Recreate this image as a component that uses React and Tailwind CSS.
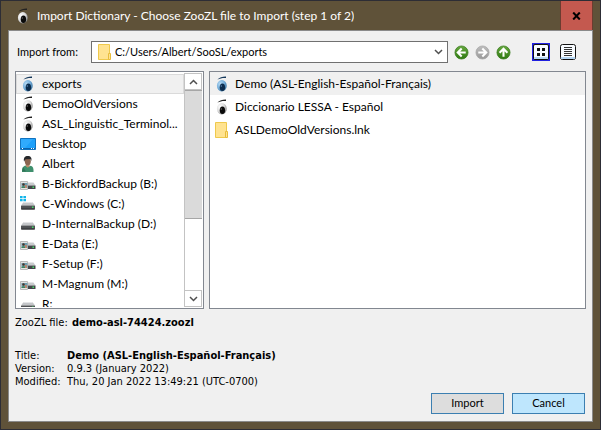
import React from 'react';

function Eye({ blue = false, className = 'h-4 w-4' }) {
  const id = blue ? 'eye-blue' : 'eye-white';
  return (
    <svg viewBox="0 0 16 16" className={className + ' shrink-0'} aria-hidden="true">
      <defs>
        <radialGradient id={id} cx=".35" cy=".35" r=".7">
          <stop offset="0" stopColor={blue ? '#b9dcf5' : '#ffffff'} />
          <stop offset="0.6" stopColor={blue ? '#74aedb' : '#dcdcdc'} />
          <stop offset="1" stopColor={blue ? '#3b739f' : '#858585'} />
        </radialGradient>
      </defs>
      <ellipse cx="7.800" cy="9.700" rx="4.900" ry="5.700" fill={'url(#' + id + ')'} />
      <ellipse cx="8.400" cy="11.300" rx="2.700" ry="3.800" fill={blue ? '#0c2c4d' : '#0a0a0a'} />
      <circle cx="7.300" cy="10" r=".7" fill={blue ? '#5f93bd' : '#6c6c6c'} />
      <path d="M3.400 3.600C5.400 1.400 8.800.5 12 .6v1.500C9 1.800 6 2.500 3.400 3.600z" fill={blue ? '#16395c' : '#222222'} />
    </svg>
  );
}

function Folder() {
  return (
    <svg viewBox="0 0 16 18" className="h-[18px] w-4 shrink-0" aria-hidden="true">
      <path d="M1.500 1.500h11v15h-11z" fill="#ffe391" stroke="#efc94c" />
      <path d="M11.500 10.500h2v6h-2z" fill="#ffe391" stroke="#e8bd3c" />
    </svg>
  );
}

function Desktop() {
  return (
    <svg viewBox="0 0 16 16" className="h-4 w-4 shrink-0" aria-hidden="true">
      <path d="M.5 2.500h15v11H.5z" fill="#1da0fa" stroke="#1173c0" />
      <path d="M1 3h12L5 12H1z" fill="#3db0ff" opacity=".6" />
      <path d="M1 12h14v1H1z" fill="#0b63ad" />
      <path d="M2 12h1v1H2zM11 12h1v1h-1zM13 12h1v1h-1z" fill="#fff" />
    </svg>
  );
}

function Person() {
  return (
    <svg viewBox="0 0 16 16" className="h-4 w-4 shrink-0" aria-hidden="true">
      <path d="M2 16c-.3-3.500.8-5.600 3.200-6.500l3 1.200 2.600-1c2.200.7 3 2.800 2.700 6.300z" fill="#3f8f6d" />
      <path d="M5.800 8h3.800v2.200l-1.800 1.600-2-1.600z" fill="#b98a68" />
      <ellipse cx="7.800" cy="5.200" rx="3" ry="4" fill="#8a6450" />
      <path d="M4 5.500C3.200 1.800 5 0 7.800 0c3 0 4.300 2 3.400 5l-.8-2-4.800.3z" fill="#26282b" />
      <path d="M3 11l3 4.500H2z" fill="#2f7557" />
    </svg>
  );
}

function Drive({ kind = 'plain' }) {
  if (kind === 'network') {
    return (
      <svg viewBox="0 0 16 16" className="h-4 w-4 shrink-0" aria-hidden="true">
        <path d="M7 6.500h6.500l2 3H7z" fill="#c9cbce" />
        <path d="M7 9.500h8.500V13H7z" fill="#44474a" />
        <path d="M12.500 10.500h1.500V12h-1.500z" fill="#43d564" />
        <path d="M.5 5.500h7v8h-7z" fill="#e4e4e4" stroke="#b9b9b9" />
        <path d="M1.500 7h6v5h-6z" fill="#6f9dad" />
        <circle cx="3.500" cy="8.500" r="1.200" fill="#4b3329" />
        <path d="M1.500 12c0-2.500 3.500-2.500 4 0z" fill="#41845e" />
        <path d="M5 9h2v3H5z" fill="#b98a70" />
      </svg>
    );
  }
  return (
    <svg viewBox="0 0 16 16" className="h-4 w-4 shrink-0" aria-hidden="true">
      <path d="M3.500 6h9l2.500 3.500H1z" fill="#c4c6c9" />
      <path d="M3.500 6h9l.7 1H2.800z" fill="#e4e5e7" />
      <rect x="1" y="9.500" width="14" height="4" rx=".6" fill="#505255" />
      <path d="M1.500 12.500h13v1h-13z" fill="#2c2e31" />
      <path d="M12 10.500h1.500V12H12z" fill="#43d564" />
      {kind === 'windows' && (
        <g>
          <path d="M0 0h7v6H0z" fill="#fff" />
          <path d="M0 0h2.600v2.200H0zM3.400 0H6v2.200H3.400zM0 3h2.600v2.200H0zM3.400 3H6v2.200H3.400z" fill="#10b5ea" />
        </g>
      )}
    </svg>
  );
}

function RoundArrow({ label, direction, disabled = false }) {
  const id = 'arrow-' + direction;
  const turn = { left: 0, up: 90, right: 180 }[direction];
  return (
    <button type="button" aria-label={label} disabled={disabled} className="h-[15px] w-[15px] shrink-0">
      <svg viewBox="0 0 16 16" className="block h-[15px] w-[15px]" aria-hidden="true">
        <defs>
          <linearGradient id={id} x1="0" y1="0" x2="0" y2="1">
            <stop offset="0" stopColor={disabled ? '#bdbdbd' : '#67a83f'} />
            <stop offset="1" stopColor={disabled ? '#9a9a9a' : '#2f7a12'} />
          </linearGradient>
        </defs>
        <circle cx="8" cy="8" r="7" fill={'url(#' + id + ')'} stroke={disabled ? '#a8a8a8' : '#3c7d22'} strokeWidth=".8" />
        <g transform={'rotate(' + turn + ' 8 8)'}>
          <path d="M8.200 3.800L4 8l4.200 4.200M4.500 8H12.500" fill="none" stroke="#fff" strokeWidth="2.200" />
        </g>
      </svg>
    </button>
  );
}

const places = [
  { name: 'exports', icon: <Eye blue />, selected: true },
  { name: 'DemoOldVersions', icon: <Eye /> },
  { name: 'ASL_Linguistic_Terminol...', icon: <Eye /> },
  { name: 'Desktop', icon: <Desktop /> },
  { name: 'Albert', icon: <Person /> },
  { name: 'B-BickfordBackup (B:)', icon: <Drive kind="network" /> },
  { name: 'C-Windows (C:)', icon: <Drive kind="windows" /> },
  { name: 'D-InternalBackup (D:)', icon: <Drive /> },
  { name: 'E-Data (E:)', icon: <Drive kind="network" /> },
  { name: 'F-Setup (F:)', icon: <Drive kind="network" /> },
  { name: 'M-Magnum (M:)', icon: <Drive kind="network" /> },
  { name: 'R:', icon: <Drive /> },
];

const files = [
  { name: 'Demo (ASL-English-Español-Français)', icon: <Eye blue />, selected: true },
  { name: 'Diccionario LESSA - Español', icon: <Eye /> },
  { name: 'ASLDemoOldVersions.lnk', icon: <Folder /> },
];

function Chevron({ up = false }) {
  return (
    <svg viewBox="0 0 9 6" className="h-[6px] w-[9px]" aria-hidden="true">
      <path d={up ? 'M1 5l3.500-3.500L8 5' : 'M1 1l3.500 3.500L8 1'} fill="none" stroke="#505050" strokeWidth="1.500" />
    </svg>
  );
}

function ScrollBar() {
  return (
    <div className="flex w-[18px] shrink-0 flex-col border-l border-[#c3c3c3] bg-white">
      <button type="button" aria-label="Scroll up" className="flex h-[17px] items-center justify-center border border-l-0 border-[#c3c3c3]">
        <Chevron up />
      </button>
      <div className="h-[129px] border-y border-[#a6a6a6] bg-[#dadada]" />
      <div className="flex-1" />
      <button type="button" aria-label="Scroll down" className="flex h-[17px] items-center justify-center border border-l-0 border-[#c3c3c3]">
        <Chevron />
      </button>
    </div>
  );
}

export default function App() {
  return (
    <div className="flex min-h-screen flex-col border border-[#2d2d35] bg-[#5f5239] px-[7px] pb-[7px] font-['Lato','Open_Sans',sans-serif] text-xs text-black">
      <header className="flex h-[29px] shrink-0 items-center text-white">
        <div className="flex min-w-0 flex-1 items-center gap-[6px] pl-[7px]">
          <Eye />
          <h1 className="truncate">Import Dictionary - Choose ZooZL file to Import (step 1 of 2)</h1>
        </div>
        <button type="button" aria-label="Close" className="flex h-full w-[33px] items-center justify-center border-x border-[#6b3c30] bg-[#c4594f]">
          <svg viewBox="0 0 9 8" className="h-2 w-[9px]" aria-hidden="true">
            <path d="M1.200.5l6.600 7M7.800.5l-6.600 7" stroke="#000" strokeWidth="2" />
          </svg>
        </button>
      </header>

      <main className="flex flex-1 flex-col border border-[#8a8a8a] bg-[#f0f0f0] px-[6px] pt-[10px] pb-[7px]">
        <div className="flex h-[22px] items-center pl-[2px]">
          <label htmlFor="location" className="w-[74px] shrink-0 text-[11px]">Import from:</label>
          <div className="relative flex h-[22px] min-w-0 flex-1 items-center border border-[#707070] bg-white">
            <span className="pointer-events-none absolute left-[5px]"><Folder /></span>
            <select id="location" className="h-full w-full appearance-none bg-transparent pl-[23px] text-[11px]">
              <option>C:/Users/Albert/SooSL/exports</option>
            </select>
            <span className="pointer-events-none absolute right-1 flex"><Chevron /></span>
          </div>
          <div className="flex items-center gap-[6px] pl-[6px]">
            <RoundArrow label="Back" direction="left" />
            <RoundArrow label="Forward" direction="right" disabled />
            <RoundArrow label="Up" direction="up" />
          </div>
          <div className="flex items-center gap-[9px] pr-[9px] pl-[21px]">
            <button type="button" aria-label="Icon view" className="h-[18px] w-[18px] bg-[#2020e0]">
              <svg viewBox="0 0 18 18" className="block h-[18px] w-[18px]" aria-hidden="true">
                <rect x="1.500" y="1.500" width="15" height="15" rx="1.500" fill="#f7fbff" stroke="#111" />
                <path d="M2 14h14v2H2z" fill="#b5d7f5" />
                <path d="M5 5h3v3H5zM10 5h3v3h-3zM5 10h3v3H5zM10 10h3v3h-3z" fill="#111" />
              </svg>
            </button>
            <button type="button" aria-label="List view" className="h-[18px] w-[18px]">
              <svg viewBox="0 0 18 18" className="block h-[18px] w-[18px]" aria-hidden="true">
                <rect x="1.500" y="1.500" width="15" height="15" rx="2" fill="#f7fbff" stroke="#111" />
                <path d="M2 14h14v2H2z" fill="#b5d7f5" />
                <path d="M5 4.500h8M5 6.500h8M5 8.500h8M5 10.500h8M5 12.500h8" stroke="#333" />
              </svg>
            </button>
          </div>
        </div>

        <div className="mt-2 flex gap-[5px]">
          <section aria-label="Places" className="flex h-[238px] w-[189px] shrink-0 border border-[#828790] bg-white p-px pl-0">
            <ul className="min-w-0 flex-1 overflow-hidden pt-px">
              {places.map((place) => (
                <li key={place.name}>
                  <button
                    type="button"
                    className={
                      place.selected
                        ? 'flex h-5 w-full items-center gap-[6px] border border-[#dadada] bg-[#f0f0f0] pl-[3px] whitespace-nowrap'
                        : 'flex h-5 w-full items-center gap-[6px] pl-1 whitespace-nowrap'
                    }
                  >
                    {place.icon}
                    {place.name}
                  </button>
                </li>
              ))}
            </ul>
            <ScrollBar />
          </section>
          <section aria-label="Files" className="h-[238px] min-w-0 flex-1 border border-[#828790] bg-white">
            <ul>
              {files.map((file) => (
                <li key={file.name}>
                  <button
                    type="button"
                    className={
                      file.selected
                        ? 'flex h-[23px] w-full items-center gap-[5px] bg-[#f0f0f0] pl-1 whitespace-nowrap'
                        : 'flex h-[23px] w-full items-center gap-[5px] pl-1 whitespace-nowrap'
                    }
                  >
                    {file.icon}
                    {file.name}
                  </button>
                </li>
              ))}
            </ul>
          </section>
        </div>

        <div className="mt-[6px] flex h-4 items-center font-['DejaVu_Sans_Condensed','Open_Sans',sans-serif] text-[11px]">
          <span className="w-[57px] whitespace-nowrap">ZooZL file:</span>
          <strong>demo-asl-74424.zoozl</strong>
        </div>

        <dl className="mt-[18px] grid grid-cols-[52px_1fr] font-['DejaVu_Sans_Condensed','Open_Sans',sans-serif] text-[11px] leading-[13px]">
          <dt>Title:</dt>
          <dd className="font-bold">Demo (ASL-English-Español-Français)</dd>
          <dt>Version:</dt>
          <dd>0.9.3 (January 2022)</dd>
          <dt>Modified:</dt>
          <dd>Thu, 20 Jan 2022 13:49:21 (UTC-0700)</dd>
        </dl>

        <div className="mt-auto flex justify-end gap-2 pr-px text-[11px]">
          <button type="button" className="h-[21px] w-[73px] border border-[#3c7fb1] bg-[#dddddd]">Import</button>
          <button type="button" className="h-[21px] w-[73px] border border-[#3c7fb1] bg-[#bee6fd]">Cancel</button>
        </div>
      </main>
    </div>
  );
}
